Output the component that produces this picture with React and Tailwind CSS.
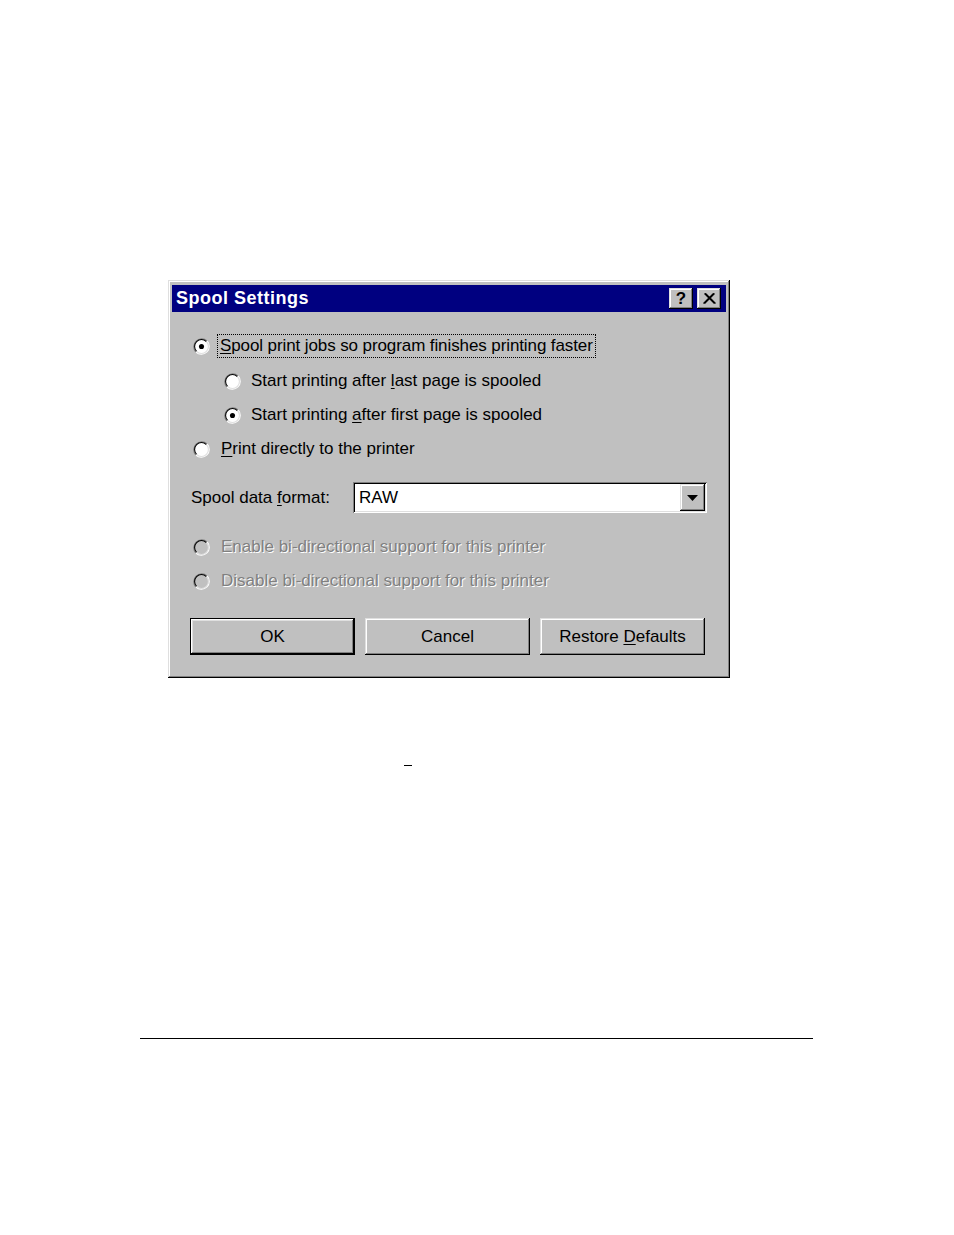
import React from "react";

const raised =
  "shadow-[inset_-1px_-1px_#000,inset_1px_1px_#dfdfdf,inset_-2px_-2px_#808080,inset_2px_2px_#fff]";
const sunken =
  "shadow-[inset_1px_1px_#808080,inset_-1px_-1px_#fff,inset_2px_2px_#000,inset_-2px_-2px_#dfdfdf]";

function Radio({ checked, disabled }) {
  return (
    <svg width="17" height="17" viewBox="0 0 16 16" className="shrink-0">
      <circle cx="8" cy="8" r="7" fill={disabled ? "#c0c0c0" : "#fff"} />
      <path d="M2.7 13.3 A7.5 7.5 0 0 1 13.3 2.7" fill="none" stroke="#808080" strokeWidth="1" />
      <path d="M13.3 2.7 A7.5 7.5 0 0 1 2.7 13.3" fill="none" stroke="#fff" strokeWidth="1" />
      <path d="M3.4 12.6 A6.5 6.5 0 0 1 12.6 3.4" fill="none" stroke="#000" strokeWidth="1" />
      <path d="M12.6 3.4 A6.5 6.5 0 0 1 3.4 12.6" fill="none" stroke="#dfdfdf" strokeWidth="1" />
      {checked && <circle cx="8" cy="8" r="2.4" fill="#000" />}
    </svg>
  );
}

function U({ children }) {
  return <span className="underline underline-offset-2 decoration-1">{children}</span>;
}

function DisabledText({ children }) {
  return (
    <span className="text-[#808080] [text-shadow:1px_1px_0_#fff]">{children}</span>
  );
}

export default function App() {
  return (
    <div
      className="w-[954px] h-[1235px] bg-white flex flex-col"
      style={{ fontFamily: '"Liberation Sans", Arial, sans-serif' }}
    >
      <div className="h-[280px] shrink-0" />
      <div className={`ml-[168px] w-[562px] h-[398px] bg-[#c0c0c0] ${raised} flex flex-col p-[4px] text-[17px] text-black`}>
        {/* Title bar */}
        <div className="mt-[1px] h-[27px] bg-[#000080] flex items-center pl-[4px] pr-[5px]">
          <span className="text-white font-bold text-[18px] tracking-[0.5px] flex-1">Spool Settings</span>
          <div className={`w-[24px] h-[21px] bg-[#c0c0c0] ${raised} flex items-center justify-center font-bold text-[17px] leading-none`}>?</div>
          <div className={`ml-[4px] w-[24px] h-[21px] bg-[#c0c0c0] ${raised} flex items-center justify-center`}>
            <svg width="13" height="11" viewBox="0 0 13 11">
              <path d="M1.5 0.5 L11.5 10.5 M2.5 0.5 L12.5 10.5 M11.5 0.5 L1.5 10.5 M10.5 0.5 L0.5 10.5" stroke="#000" strokeWidth="1.3" />
            </svg>
          </div>
        </div>

        <div className="pl-[21px] flex flex-col">
          <div className="mt-[17px] h-[34px] flex items-center">
            <Radio checked />
            <span className="ml-[7px] px-[2px] py-[1px] border border-dotted border-black leading-[20px] whitespace-nowrap tracking-[-0.1px]">
              <U>S</U>pool print jobs so program finishes printing faster
            </span>
          </div>
          <div className="mt-[1px] h-[34px] flex items-center pl-[31px]">
            <Radio />
            <span className="ml-[10px] whitespace-nowrap">Start printing after <U>l</U>ast page is spooled</span>
          </div>
          <div className="h-[34px] flex items-center pl-[31px]">
            <Radio checked />
            <span className="ml-[10px] whitespace-nowrap">Start printing <U>a</U>fter first page is spooled</span>
          </div>
          <div className="h-[34px] flex items-center">
            <Radio />
            <span className="ml-[11px] whitespace-nowrap"><U>P</U>rint directly to the printer</span>
          </div>

          <div className="mt-[16px] h-[31px] flex items-center">
            <span className="w-[162px] -ml-[2px] whitespace-nowrap">Spool data <U>f</U>ormat:</span>
            <div className={`w-[354px] h-[31px] bg-white ${sunken} flex items-center p-[2px]`}>
              <span className="flex-1 pl-[4px]">RAW</span>
              <div className={`w-[25px] h-[27px] bg-[#c0c0c0] ${raised} flex items-center justify-center`}>
                <svg width="11" height="6" viewBox="0 0 11 6">
                  <path d="M0 0 H11 L5.5 6 Z" fill="#000" />
                </svg>
              </div>
            </div>
          </div>

          <div className="mt-[17px] h-[34px] flex items-center">
            <Radio disabled />
            <span className="ml-[11px] whitespace-nowrap"><DisabledText>Enable bi-directional support for this printer</DisabledText></span>
          </div>
          <div className="h-[34px] flex items-center">
            <Radio disabled />
            <span className="ml-[11px] whitespace-nowrap"><DisabledText>Disable bi-directional support for this printer</DisabledText></span>
          </div>

          <div className="mt-[20px] flex gap-[10px] -ml-[3px]">
            <div className={`w-[165px] h-[37px] bg-[#c0c0c0] border border-black shadow-[inset_-1px_-1px_#000,inset_1px_1px_#fff,inset_-2px_-2px_#808080,inset_2px_2px_#dfdfdf] flex items-center justify-center`}>OK</div>
            <div className={`w-[165px] h-[37px] bg-[#c0c0c0] ${raised} flex items-center justify-center`}>Cancel</div>
            <div className={`w-[165px] h-[37px] bg-[#c0c0c0] ${raised} flex items-center justify-center`}>
              <span className="whitespace-nowrap">Restore <U>D</U>efaults</span>
            </div>
          </div>
        </div>
      </div>

      <div className="mt-[87px] ml-[404px] w-[8px] h-[1px] bg-black" />
      <div className="mt-[272px] ml-[140px] w-[673px] h-[1px] bg-black" />
    </div>
  );
}
